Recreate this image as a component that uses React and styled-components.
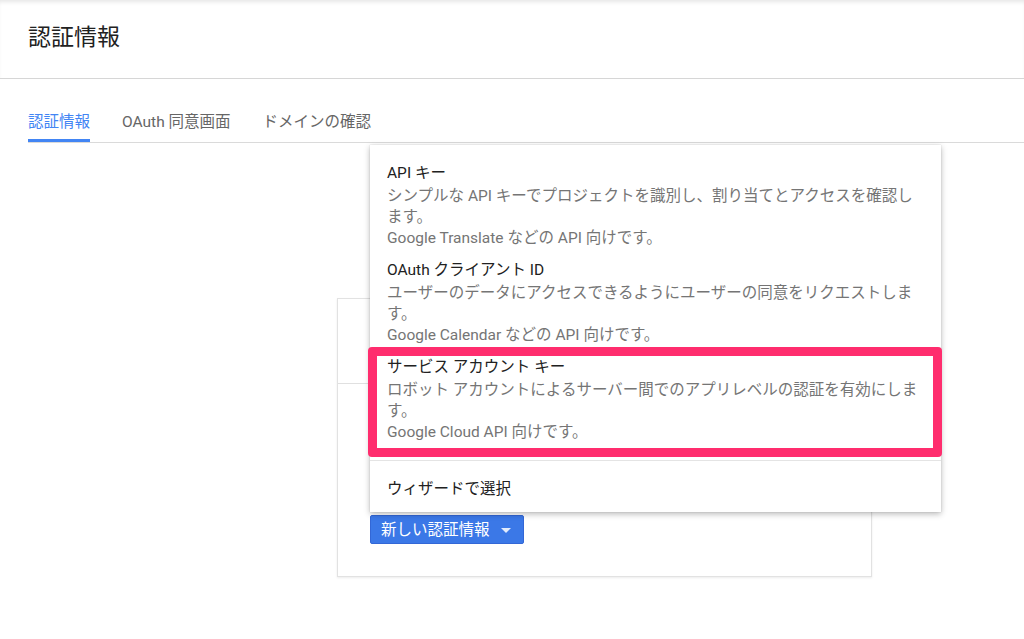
import React from 'react';
import styled, { createGlobalStyle } from 'styled-components';

const GlobalStyle = createGlobalStyle`
  html, body {
    margin: 0;
    padding: 0;
    background: #ffffff;
  }
  body {
    font-family: Roboto, "Noto Sans CJK JP", sans-serif;
    color: #212121;
  }
`;

const menuItems = [
  {
    key: 'api',
    title: 'API キー',
    lines: [
      'シンプルな API キーでプロジェクトを識別し、割り当てとアクセスを確認し',
      'ます。',
      'Google Translate などの API 向けです。',
    ],
  },
  {
    key: 'oauth',
    title: 'OAuth クライアント ID',
    lines: [
      'ユーザーのデータにアクセスできるようにユーザーの同意をリクエストしま',
      'す。',
      'Google Calendar などの API 向けです。',
    ],
  },
  {
    key: 'service',
    title: 'サービス アカウント キー',
    lines: [
      'ロボット アカウントによるサーバー間でのアプリレベルの認証を有効にしま',
      'す。',
      'Google Cloud API 向けです。',
    ],
    marked: true,
  },
];

const tabs = ['認証情報', 'OAuth 同意画面', 'ドメインの確認'];

function App() {
  return (
    <Page>
      <GlobalStyle />
      <Header>
        <Title>認証情報</Title>
      </Header>
      <TabBar>
        {tabs.map((label, i) => (
          <Tab key={label} active={i === 0}>{label}</Tab>
        ))}
      </TabBar>
      <Content>
        <Card>
          <CardTop />
          <CardBody>
            <ButtonWrap>
              <Menu>
                {menuItems.map((item) => (
                  <MenuItem key={item.key}>
                    <ItemTitle>{item.title}</ItemTitle>
                    {item.lines.map((line) => (
                      <ItemDesc key={line}>{line}</ItemDesc>
                    ))}
                    {item.marked && <Highlight />}
                  </MenuItem>
                ))}
                <Divider />
                <WizardItem>
                  <ItemTitle>ウィザードで選択</ItemTitle>
                </WizardItem>
              </Menu>
              <PrimaryButton type="button">
                新しい認証情報
                <Caret />
              </PrimaryButton>
            </ButtonWrap>
          </CardBody>
        </Card>
      </Content>
    </Page>
  );
}

const Page = styled.div`
  width: 1024px;
  height: 639px;
  overflow: hidden;
  background: #fff;
`;

const Header = styled.header`
  height: 79px;
  box-sizing: border-box;
  display: flex;
  align-items: center;
  padding: 0 28px;
  border-bottom: 1px solid #d6d6d6;
  box-shadow: inset 0 4px 4px -2px rgba(0, 0, 0, 0.1);
`;

const Title = styled.h1`
  margin: 0 0 2px;
  font-size: 23px;
  font-weight: 400;
  line-height: 30px;
  color: #212121;
`;

const TabBar = styled.nav`
  display: flex;
  gap: 32px;
  margin-left: 28px;
  padding-top: 32px;
  border-bottom: 1px solid #dadada;
`;

const Tab = styled.div`
  font-size: 15.5px;
  line-height: 22px;
  padding-bottom: 6px;
  border-bottom: 3px solid ${(p) => (p.active ? '#4285f4' : 'transparent')};
  color: ${(p) => (p.active ? '#4285f4' : '#666666')};
  white-space: nowrap;
`;

const Content = styled.main`
  padding-top: 155px;
`;

const Card = styled.section`
  margin-left: 337px;
  width: 535px;
  height: 279px;
  box-sizing: border-box;
  border: 1px solid #e2e2e2;
  box-shadow: 0 1px 2px rgba(0, 0, 0, 0.08);
  background: #fff;
`;

const CardTop = styled.div`
  height: 84px;
  border-bottom: 1px solid #e0e0e0;
`;

const CardBody = styled.div`
  padding: 131px 0 0 32px;
`;

const ButtonWrap = styled.div`
  position: relative;
  display: inline-block;
`;

const Menu = styled.div`
  position: absolute;
  left: 0;
  bottom: calc(100% + 3px);
  width: 571px;
  box-sizing: border-box;
  padding-top: 11px;
  background: #fff;
  box-shadow: 0 2px 6px rgba(0, 0, 0, 0.28), 0 0 1px rgba(0, 0, 0, 0.2);
  z-index: 2;
`;

const MenuItem = styled.div`
  position: relative;
  padding: 4px 10px 4px 17px;
`;

const WizardItem = styled.div`
  padding: 15px 17px 10px;
`;

const ItemTitle = styled.div`
  font-size: 15.5px;
  line-height: 26px;
  color: #212121;
  white-space: nowrap;
`;

const ItemDesc = styled.div`
  font-size: 15.5px;
  line-height: 21px;
  color: #757575;
  white-space: nowrap;
`;

const Highlight = styled.div`
  position: absolute;
  top: -3px;
  bottom: -10px;
  left: -2px;
  right: -1px;
  border: 9px solid #ff2d6e;
  border-radius: 4px;
  pointer-events: none;
`;

const Divider = styled.div`
  margin-top: 13px;
  height: 1px;
  background: #e4e4e4;
`;

const PrimaryButton = styled.button`
  display: inline-flex;
  align-items: center;
  gap: 11px;
  height: 29px;
  padding: 0 12px 0 10px;
  border: 1px solid #3367d6;
  border-radius: 2px;
  background: #3b78e7;
  color: #fff;
  font-family: Roboto, "Noto Sans CJK JP", sans-serif;
  font-size: 15.5px;
  line-height: 20px;
  cursor: pointer;
`;

const Caret = styled.span`
  width: 0;
  height: 0;
  border-left: 5px solid transparent;
  border-right: 5px solid transparent;
  border-top: 5px solid rgba(255, 255, 255, 0.85);
  margin-top: 1px;
`;

export default App;
